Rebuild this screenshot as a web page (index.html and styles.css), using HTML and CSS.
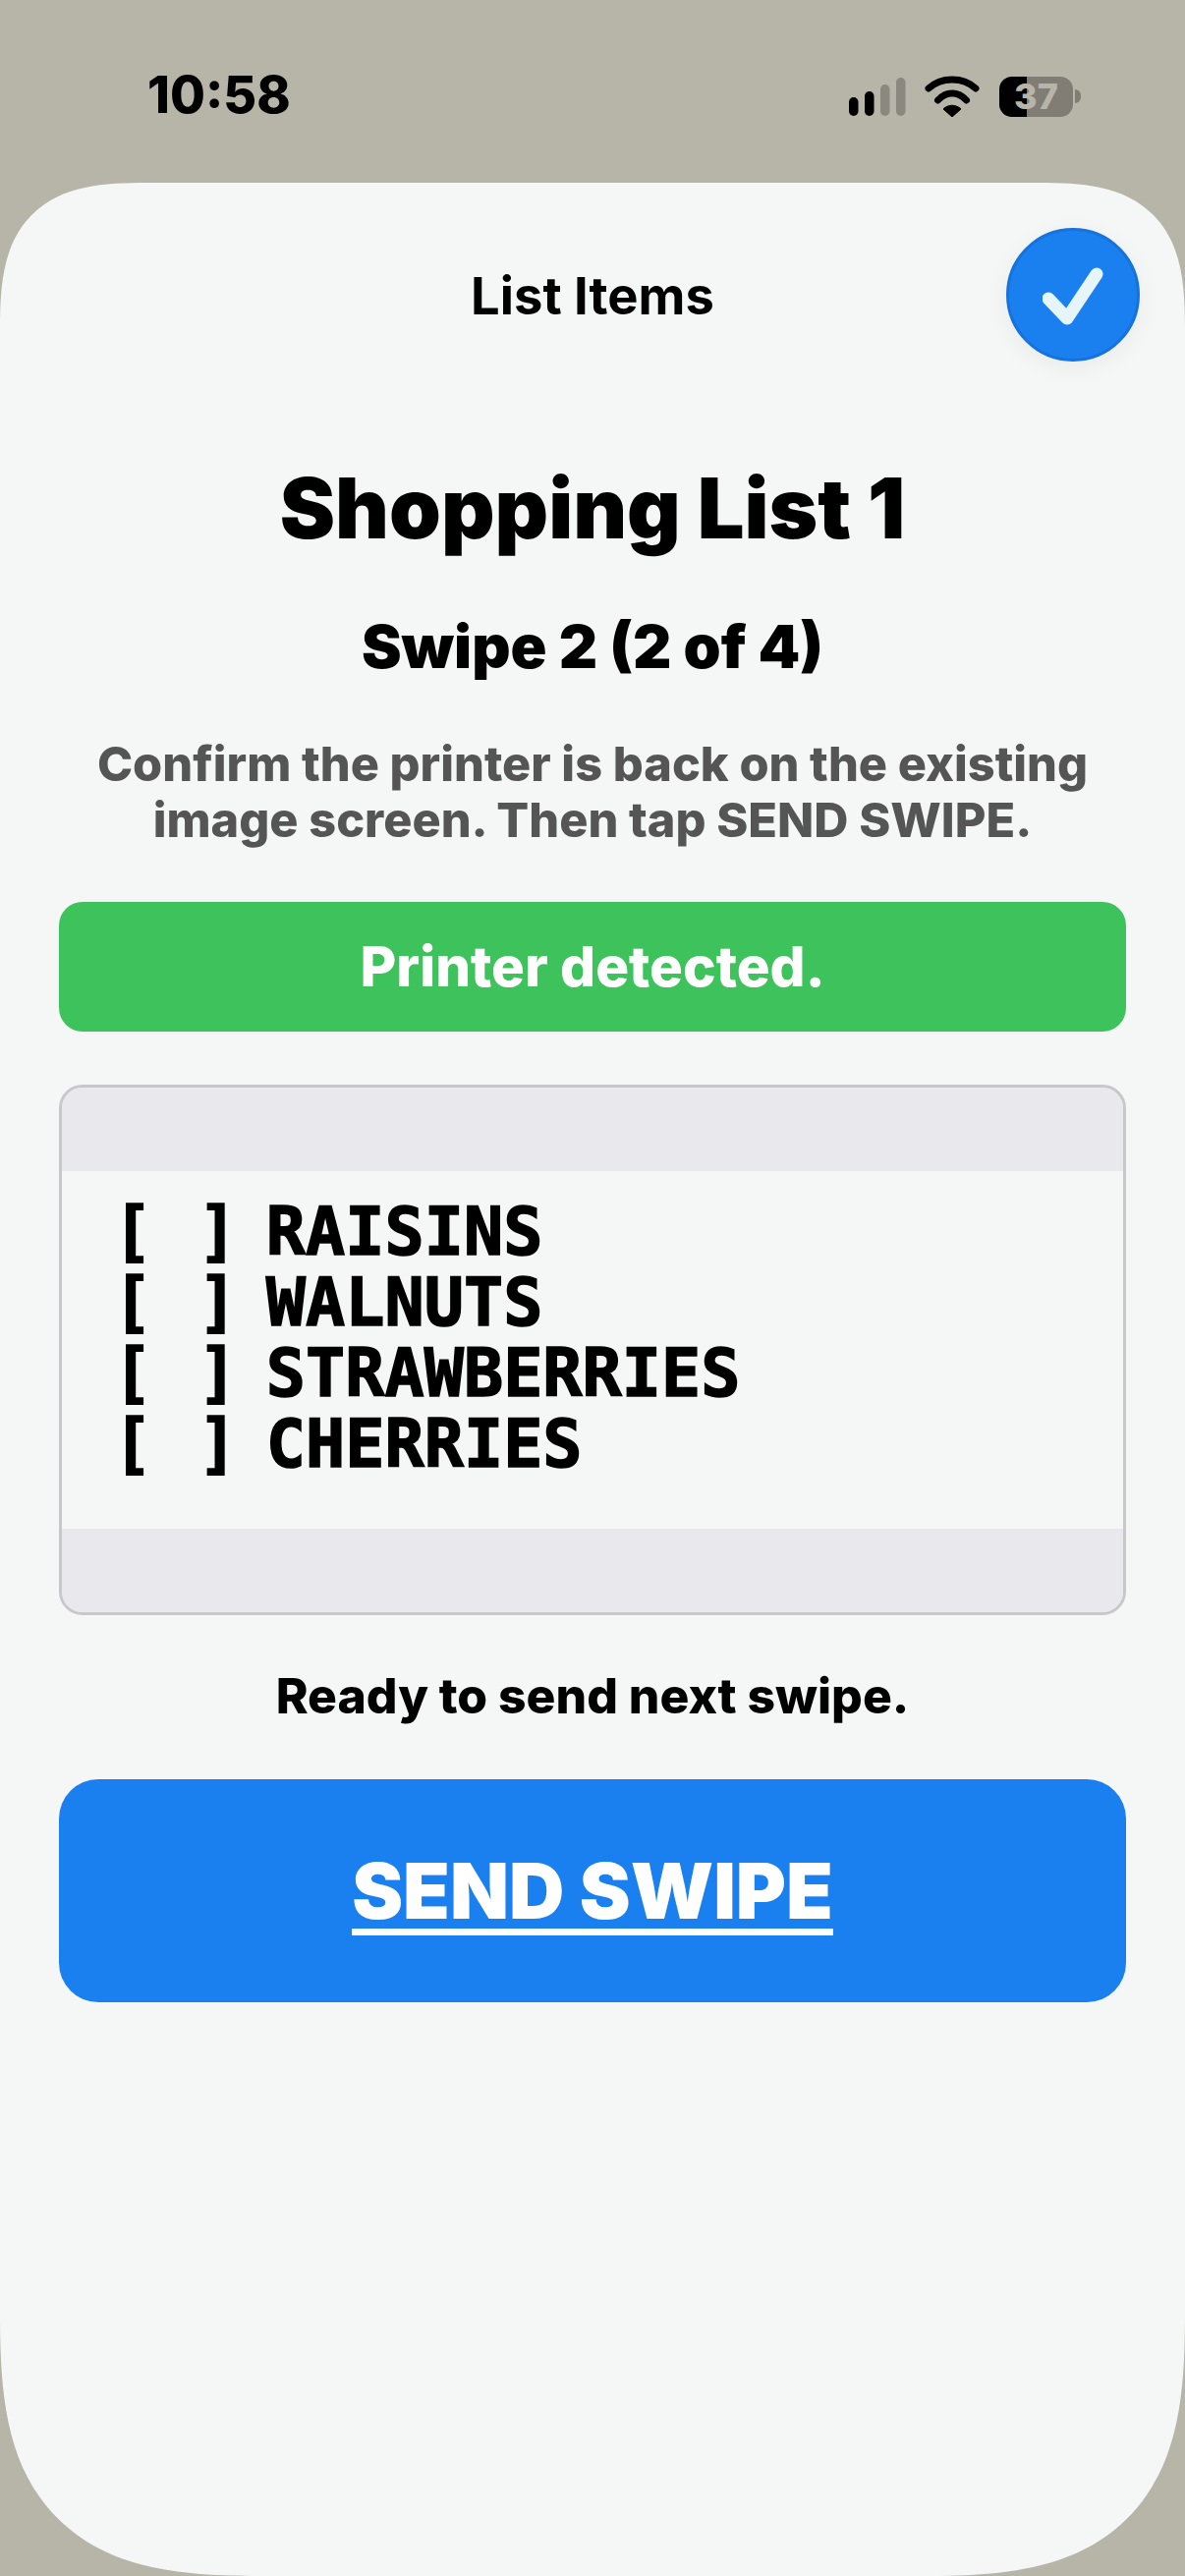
FILE: index.html
```html
<!DOCTYPE html>
<html lang="en">
<head>
    <meta charset="UTF-8">
    <meta name="viewport" content="width=device-width, initial-scale=1.0">
    <title>List Items</title>
    <link rel="stylesheet" href="styles.css">
</head>
<body>
    <div class="status-bar">
        <div class="time">10:58</div>
        <div class="status-icons">
            <svg class="signal" width="58" height="39" viewBox="0 0 58 39">
                <rect x="0" y="20" width="9.5" height="19" rx="4.7" fill="#000"/>
                <rect x="16" y="14" width="9.5" height="25" rx="4.7" fill="#000"/>
                <rect x="32" y="7" width="9.5" height="32" rx="4.7" fill="#8b887f"/>
                <rect x="48" y="0" width="9.5" height="39" rx="4.7" fill="#8b887f"/>
            </svg>
            <svg class="wifi" width="56" height="42" viewBox="0 0 56 42">
                <path d="M4 13 C17 1 39 1 52 13" fill="none" stroke="#000" stroke-width="7" stroke-linecap="round"/>
                <path d="M13.5 25 C22 15.5 34 15.5 42.5 25" fill="none" stroke="#000" stroke-width="7" stroke-linecap="round"/>
                <path d="M28 42 L19 34 C24 29 32 29 37 34 Z" fill="#000" stroke="#000" stroke-width="1" stroke-linejoin="round"/>
            </svg>
            <div class="battery">
                <div class="battery-body">
                    <div class="battery-fill"></div>
                    <span class="battery-num">37</span>
                </div>
                <div class="battery-tip"></div>
            </div>
        </div>
    </div>

    <div class="sheet">
        <button class="done-button">
            <svg width="62" height="62" viewBox="0 0 62 62">
                <path d="M6 35 L25 55 L55 10" fill="none" stroke="#e6f5f7" stroke-width="13" stroke-linecap="round" stroke-linejoin="round"/>
            </svg>
        </button>

        <div class="sheet-title">List Items</div>
        <h1>Shopping List 1</h1>
        <h2>Swipe 2 (2 of 4)</h2>
        <p class="instructions">Confirm the printer is back on the existing image screen. Then tap SEND SWIPE.</p>
        <div class="banner">Printer detected.</div>

        <div class="preview">
            <div class="preview-band"></div>
            <div class="preview-list">
                <div><span class="box">[ ]</span>RAISINS</div>
                <div><span class="box">[ ]</span>WALNUTS</div>
                <div><span class="box">[ ]</span>STRAWBERRIES</div>
                <div><span class="box">[ ]</span>CHERRIES</div>
            </div>
            <div class="preview-band"></div>
        </div>

        <div class="ready">Ready to send next swipe.</div>
        <div class="send-button">SEND SWIPE</div>
    </div>
</body>
</html>
```

FILE: styles.css
```css
html, body {
    height: 100%;
}
body {
    margin: 0;
    height: 2622px;
    display: flex;
    flex-direction: column;
    background-color: #b7b5a8;
    font-family: Inter, "Liberation Sans", sans-serif;
    color: #000;
    overflow: hidden;
}
.status-bar {
    height: 186px;
    flex: none;
    box-sizing: border-box;
    padding: 76px 106px 0 150px;
    display: flex;
    justify-content: space-between;
    align-items: flex-start;
}
.time {
    font-size: 52px;
    font-weight: 800;
    line-height: 42px;
}
.status-icons {
    display: flex;
    align-items: center;
    gap: 19px;
    padding-top: 1px;
}
.battery {
    display: flex;
    align-items: center;
    gap: 2px;
    margin-left: 1px;
}
.battery-body {
    position: relative;
    width: 75px;
    height: 41px;
    border-radius: 13px;
    background-color: #807d75;
}
.battery-fill {
    width: 28px;
    height: 100%;
    border-radius: 13px 0 0 13px;
    background-color: #000;
}
.battery-num {
    position: absolute;
    left: 0;
    right: 0;
    top: 0;
    text-align: center;
    font-size: 36px;
    line-height: 41px;
    font-weight: 800;
    color: #b7b5a8;
}
.battery-tip {
    width: 6px;
    height: 14px;
    border-radius: 0 7px 7px 0;
    background-color: #807d75;
}
.sheet {
    position: relative;
    flex: 1;
    box-sizing: border-box;
    padding: 0 60px;
    background-color: #f5f7f7;
    border-radius: 150px 150px 270px 270px;
    corner-shape: superellipse(1.5);
    text-align: center;
}
.done-button {
    position: absolute;
    top: 46px;
    right: 46px;
    width: 136px;
    height: 136px;
    padding: 0;
    box-sizing: border-box;
    border: 3px solid #1672dc;
    border-radius: 50%;
    background-color: #1a80f0;
    box-shadow: 0 6px 24px rgba(0, 0, 0, 0.05);
    display: flex;
    align-items: center;
    justify-content: center;
}
.sheet-title {
    padding-top: 85px;
    font-size: 52.5px;
    line-height: 60px;
    font-weight: 700;
}
h1 {
    margin: 136px 0 0;
    font-size: 84.6px;
    line-height: 100px;
    font-weight: 900;
}
h2 {
    margin: 56px 0 0;
    font-size: 61px;
    line-height: 70px;
    font-weight: 900;
}
.instructions {
    margin: 56px 0 0;
    padding: 0 30px;
    font-size: 48.7px;
    line-height: 57px;
    font-weight: 800;
    color: #555;
}
.banner {
    margin-top: 55px;
    height: 132px;
    line-height: 132px;
    border-radius: 24px;
    background-color: #3ec25c;
    color: #fff;
    font-size: 56.5px;
    font-weight: 800;
}
.preview {
    margin-top: 54px;
    box-sizing: border-box;
    height: 540px;
    border: 3px solid #c8c8cc;
    border-radius: 24px;
    overflow: hidden;
    display: flex;
    flex-direction: column;
}
.preview-band {
    flex: none;
    height: 85px;
    background-color: #e9e8ed;
}
.preview-list {
    flex: 1;
    padding: 26px 0 0 47px;
    text-align: left;
    font-family: "DejaVu Sans Mono", monospace;
    font-size: 66.8px;
    line-height: 72px;
    font-weight: 700;
    -webkit-text-stroke: 1.5px #000;
}
.box {
    display: inline-block;
    width: 4ch;
    box-sizing: border-box;
    padding-left: 5px;
    letter-spacing: 3px;
}
.ready {
    margin-top: 54px;
    font-size: 49.8px;
    line-height: 56px;
    font-weight: 800;
}
.send-button {
    margin-top: 57px;
    height: 227px;
    line-height: 227px;
    border-radius: 40px;
    background-color: #1a80f0;
    color: #fff;
    font-size: 78px;
    font-weight: 900;
    text-decoration: underline;
    text-decoration-thickness: 7px;
    text-underline-offset: 10px;
}
```
